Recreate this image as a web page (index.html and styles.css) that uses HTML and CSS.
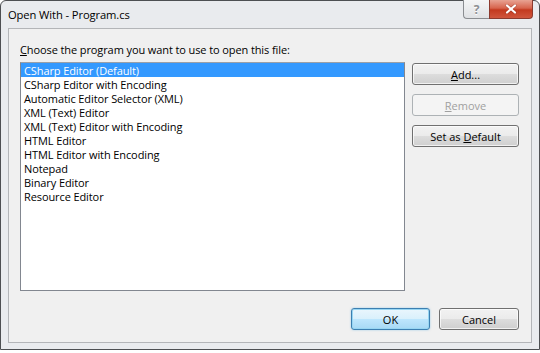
FILE: index.html
```html
<!DOCTYPE html>
<html lang="en">
<head>
  <meta charset="UTF-8">
  <title>Open With - Program.cs</title>
  <link rel="stylesheet" href="styles.css">
</head>
<body>

  <div class="window">
    <div class="titlebar">
      <span class="title">Open With - Program.cs</span>
      <div class="caption-btns">
        <div class="cap help">?</div>
        <div class="cap close">
          <svg width="14" height="10" viewBox="0 0 14 10">
            <path d="M3 1.5 L11 8.5 M11 1.5 L3 8.5" stroke="#7a2418" stroke-width="3.4" stroke-linecap="round" opacity=".35"/>
            <path d="M3 1.5 L11 8.5 M11 1.5 L3 8.5" stroke="#fff" stroke-width="2.2" stroke-linecap="round"/>
          </svg>
        </div>
      </div>
    </div>

    <div class="client">
      <div class="prompt"><u>C</u>hoose the program you want to use to open this file:</div>

      <div class="main">
        <ul class="list" id="list"></ul>
        <div class="side">
          <button class="btn"><u>A</u>dd...</button>
          <button class="btn" disabled><u>R</u>emove</button>
          <button class="btn">Set as <u>D</u>efault</button>
        </div>
      </div>

      <div class="footer">
        <button class="btn default">OK</button>
        <button class="btn">Cancel</button>
      </div>
    </div>
  </div>

  <script>
    const programs = [
      "CSharp Editor (Default)",
      "CSharp Editor with Encoding",
      "Automatic Editor Selector (XML)",
      "XML (Text) Editor",
      "XML (Text) Editor with Encoding",
      "HTML Editor",
      "HTML Editor with Encoding",
      "Notepad",
      "Binary Editor",
      "Resource Editor"
    ];
    document.getElementById('list').innerHTML = programs.map((p, i) =>
      `<li class="${i === 0 ? 'selected' : ''}">${p}</li>`
    ).join('');
  </script>
</body>
</html>
```

FILE: styles.css
```css
* { margin:0; padding:0; box-sizing:border-box; }
body {
  background:#fff;
  font-family:'Open Sans', 'Noto Sans', sans-serif;
  font-size:11px; letter-spacing:-0.1px; color:#000;
}
.window {
  width:540px;
  background:#e9ebee;
  border:1px solid #4d4f52;
  border-radius:6px 6px 0 0;
  padding-bottom:6px;
}
.titlebar {
  height:27px;
  display:flex; justify-content:space-between; align-items:flex-start;
  padding:0 6px 0 7px;
}
.title { font-size:11.2px; line-height:28px; color:#000; }
.caption-btns { display:flex; margin-top:-1px; }
.cap {
  height:19px;
  display:flex; align-items:center; justify-content:center;
  border:1px solid #8a8d91; border-top:none;
}
.help {
  width:26px;
  border-radius:0 0 0 4px; border-right:none;
  background:linear-gradient(#f4f5f6, #dfe1e4);
  color:#8c8f93; font-weight:bold; font-size:12px;
  text-shadow:0 1px 0 #fff;
}
.close {
  width:44px;
  border-radius:0 0 4px 0; border-color:#8c3a2e;
  background:linear-gradient(#e8a393 0%, #d7644d 45%, #c3391f 55%, #d0563d 100%);
}

.client {
  margin:0 7px;
  background:#f0f0f0;
  border:1px solid #b3b5b8;
  padding:13px 12px 12px 11px;
}
.prompt { line-height:16px; margin-bottom:4px; }

.main { display:flex; gap:7px; }
.list {
  list-style:none;
  width:385px; height:229px;
  background:#fff;
  border:1px solid #828790;
  border-top-color:#9aa0a8;
}
.list li { height:14px; line-height:15px; padding-left:3px; white-space:nowrap; }
.list li.selected { background:#3399ff; color:#fff; }

.side { display:flex; flex-direction:column; gap:9px; padding-top:1px; }
.btn {
  width:107px; height:22px;
  font:inherit; color:#000;
  border:1px solid #707070; border-radius:3px;
  background:linear-gradient(#f2f2f2 0%, #ebebeb 50%, #dddddd 51%, #cfcfcf 100%);
  box-shadow:inset 0 0 0 1px rgba(255,255,255,0.7);
}
.btn:disabled {
  color:#a0a0a0;
  border-color:#adb2b5;
  background:#f4f4f4;
  box-shadow:none;
}
.footer {
  display:flex; justify-content:flex-end; gap:9px;
  margin-top:17px;
}
.footer .btn { width:80px; }
.btn.default {
  width:79px;
  border-color:#3c7fb1;
  background:linear-gradient(#eaf6fd 0%, #d9f0fc 50%, #bee6fd 51%, #a7d9f5 100%);
  box-shadow:inset 0 0 0 1px #98d6f3, 0 0 2px rgba(60,160,220,0.5);
}
```
